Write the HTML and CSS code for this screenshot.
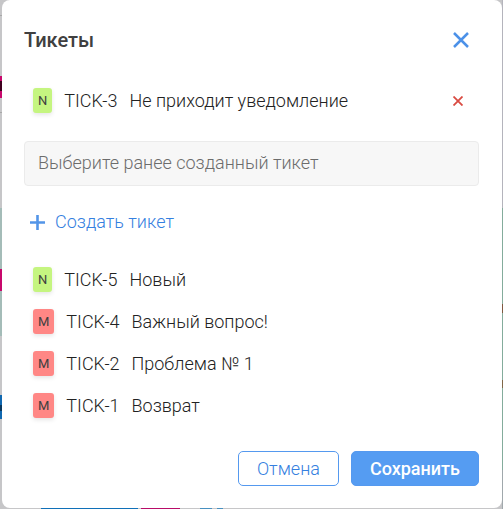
FILE: index.html
```html
<!DOCTYPE html>
<html lang="ru">
<head>
<meta charset="utf-8">
<meta name="viewport" content="width=device-width, initial-scale=1">
<title>Тикеты</title>
<link rel="stylesheet" href="styles.css">
</head>
<body>
<main class="dialog" role="dialog" aria-labelledby="dialog-title">
  <header class="header">
    <h1 class="title" id="dialog-title">Тикеты</h1>
    <button class="icon-button close" type="button" aria-label="Закрыть">
      <svg width="16" height="16" viewBox="0 0 16 16"><path d="M1 1 15 15M15 1 1 15" stroke="currentColor" stroke-width="2.5" fill="none"/></svg>
    </button>
  </header>

  <div class="ticket">
    <span class="badge badge-new">N</span>
    <span class="key">TICK-3</span>
    <span class="name">Не приходит уведомление</span>
    <button class="icon-button remove" type="button" aria-label="Убрать тикет">
      <svg width="10" height="10" viewBox="0 0 10 10"><path d="M0.5 0.5 9.5 9.5M9.5 0.5 0.5 9.5" stroke="currentColor" stroke-width="1.8" fill="none"/></svg>
    </button>
  </div>

  <input class="search" type="text" placeholder="Выберите ранее созданный тикет" aria-label="Выберите ранее созданный тикет">

  <button class="create" type="button">
    <svg width="15" height="15" viewBox="0 0 15 15"><path d="M7.5 0V15M0 7.5H15" stroke="currentColor" stroke-width="2.6" fill="none"/></svg>
    Создать тикет
  </button>

  <ul class="list">
    <li class="ticket"><span class="badge badge-new">N</span><span class="key">TICK-5</span><span class="name">Новый</span></li>
    <li class="ticket"><span class="badge badge-major">M</span><span class="key">TICK-4</span><span class="name">Важный вопрос!</span></li>
    <li class="ticket"><span class="badge badge-major">M</span><span class="key">TICK-2</span><span class="name">Проблема № 1</span></li>
    <li class="ticket"><span class="badge badge-major">M</span><span class="key">TICK-1</span><span class="name">Возврат</span></li>
  </ul>

  <footer class="actions">
    <button class="button button-outline" type="button">Отмена</button>
    <button class="button button-primary" type="button">Сохранить</button>
  </footer>
</main>
</body>
</html>
```
FILE: styles.css
```css
* {
  box-sizing: border-box;
}

/* The page behind the dialog shows as thin strips along its edges. */
body {
  margin: 0;
  padding: 0 1px 1px 2px;
  min-height: 100vh;
  color: #222;
  font: 300 18px/24px Roboto, "Liberation Sans", sans-serif;
  background-color: #c6c6c8;
  background-image:
    linear-gradient(to right, transparent 41px, #1070b8 41px 138px, transparent 138px 141px, #b80c68 141px 180px, transparent 180px 200px, #4890c0 200px 212px, transparent 212px 217px, #4890c0 217px 223px, transparent 223px),
    linear-gradient(#c6c6c8 15px, #a8a8a8 15px 16px, #c6c6c8 16px 76px, #c8086c 76px 81px, #400020 81px 91px, #c8086c 91px 98px, #c6c6c8 98px 112px, #a8a8a8 112px 113px, #c6c6c8 113px 208px, #a4bcb8 208px 269px, #c8086c 269px 291px, #a4bcb8 291px 336px, #c6c6c8 336px 395px, #1068b0 395px 405px, #083860 405px 411px, #1068b0 411px 419px, #c6c6c8 419px),
    linear-gradient(#b4b4bc 208px, #84ac9c 208px 304px, #805840 304px 313px, #84ac9c 313px 380px, #806848 380px 388px, #84ac9c 388px 470px, #a0a8ac 470px);
  background-position: left bottom, left top, right top;
  background-size: 100% 1px, 2px 100%, 1px 100%;
  background-repeat: no-repeat;
}

.dialog {
  display: flex;
  flex-direction: column;
  padding: 20px 23px 22px 22px;
  background: #fff;
  border-radius: 8px;
}

button,
input {
  font: inherit;
}

.header {
  display: flex;
  align-items: center;
  justify-content: space-between;
  height: 40px;
}

.title {
  margin: 0;
  color: #404040;
  font-size: 20px;
  font-weight: 500;
}

.icon-button {
  display: flex;
  align-items: center;
  justify-content: center;
  padding: 0;
  border: 0;
  background: none;
}

.close {
  width: 36px;
  height: 36px;
  color: #4c91e8;
}

.remove {
  width: 42px;
  height: 24px;
  margin-left: auto;
  color: #d94b42;
}

.ticket {
  display: flex;
  align-items: center;
  gap: 12px;
  padding-left: 9px;
}

.header + .ticket {
  height: 81px;
}

.badge {
  padding: 0 5px;
  border-radius: 3px;
  color: #404040;
  font-size: 13px;
  font-weight: 400;
  line-height: 25px;
  box-shadow: 0 2px 4px #0000001a;
}

.badge-new {
  background: #c5f580;
}

.badge-major {
  background: #ff8785;
}

.search {
  width: 100%;
  height: 45px;
  padding: 0 13px 2px;
  border: 1px solid #ebebeb;
  border-radius: 4px;
  background: #f7f7f7;
  color: #222;
}

.search::placeholder {
  color: #6c6c6c;
  opacity: 1;
}

.create {
  display: flex;
  align-items: center;
  align-self: flex-start;
  gap: 10px;
  height: 36px;
  margin: 18px 0;
  padding: 0 6px;
  border: 0;
  background: none;
  color: #3580e0;
}

.create svg {
  color: #5395e8;
}

.list {
  display: grid;
  gap: 17px;
  margin: 9px 0 0;
  padding: 0 0 12px;
  list-style: none;
}

.actions {
  display: flex;
  justify-content: flex-end;
  gap: 12px;
  margin-top: 21px;
}

.button {
  height: 35px;
  padding: 0 18px;
  border: 1px solid #5599ef;
  border-radius: 5px;
}

.button-outline {
  background: #fff;
  color: #3580e0;
}

.button-primary {
  background: #559cf2;
  color: #fff;
  font-weight: 500;
}
```
